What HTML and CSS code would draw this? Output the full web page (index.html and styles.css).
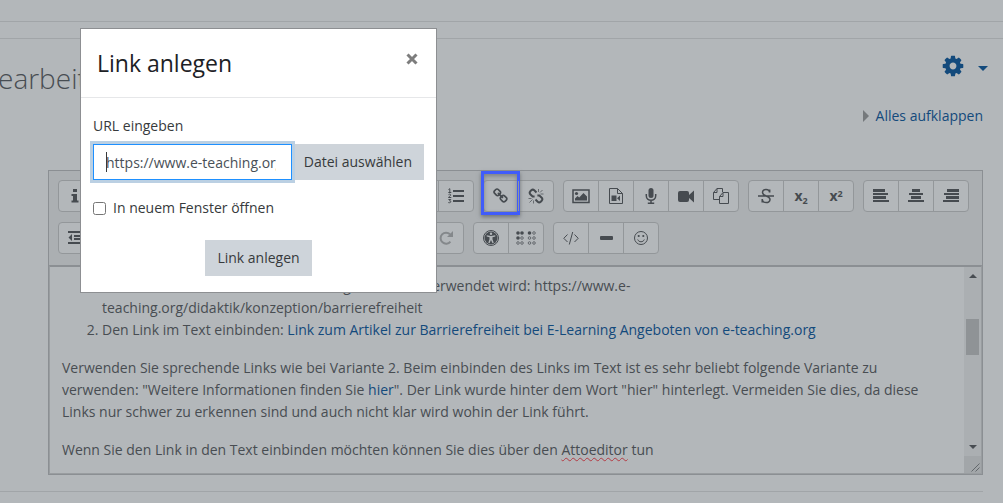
FILE: index.html
```html
<!DOCTYPE html>
<html lang="de">
<head>
<meta charset="utf-8">
<title>Link anlegen</title>
<link rel="stylesheet" href="styles.css">
</head>
<body>
<header class="topbar"></header>
<main class="page">
  <div class="page-head">
    <h1 class="page-title">earbeit</h1>
    <button class="settings" type="button" aria-label="Einstellungen">
      <svg class="cog" viewBox="0 0 1792 1792"><path d="M1152 896q0-106-75-181t-181-75-181 75-75 181 75 181 181 75 181-75 75-181zm512-109v222q0 12-8 23t-20 13l-185 28q-19 54-39 91 35 50 107 138 10 12 10 25t-9 23q-27 37-99 108t-94 71q-12 0-26-9l-138-108q-44 23-91 38-16 136-29 186-7 28-36 28h-222q-14 0-24.500-8.500t-11.500-21.500l-28-184q-49-16-90-37l-141 107q-10 9-25 9-14 0-25-11-126-114-165-168-7-10-7-23 0-12 8-23 15-21 51-66.500t54-70.500q-27-50-41-99l-183-27q-13-2-21-12.500t-8-23.500v-222q0-12 8-23t19-13l186-28q14-46 39-92-40-57-107-138-10-12-10-24 0-10 9-23 26-36 98.500-107.500t94.500-71.500q13 0 26 10l138 107q44-23 91-38 16-136 29-186 7-28 36-28h222q14 0 24.500 8.500t11.500 21.500l28 184q49 16 90 37l142-107q9-9 24-9 13 0 25 10 129 119 165 170 7 8 7 22 0 12-8 23-15 21-51 66.500t-54 70.500q26 50 41 98l183 28q13 2 21 12.500t8 23.500z"/></svg>
      <svg class="caret" viewBox="0 0 10 5"><path d="M0 0h10L5 5z"/></svg>
    </button>
  </div>
  <div class="expand">
    <svg class="expand-arrow" viewBox="0 0 6 12"><path d="M0 0l6 6-6 6z"/></svg>
    <a class="link" href="#">Alles aufklappen</a>
  </div>

  <section class="editor">
    <div class="toolbar">
      <div class="tool-row">
        <div class="lead">
          <div class="group">
            <button class="tool" type="button" aria-label="Mehr Symbole"><svg viewBox="0 0 16 16"><path d="M5 1h4v3H5zM3.500 6H9v6.500h1.500v2h-7v-2H5V8H3.500z"/></svg></button>
          </div>
        </div>
        <div class="group">
          <button class="tool" type="button" aria-label="Liste"><svg viewBox="0 0 16 16"><path d="M0 2h3v3H0zM5 2.500h11v2H5zM0 7h3v3H0zM5 7.500h11v2H5zM0 12h3v3H0zM5 12.500h11v2H5z"/></svg></button>
          <button class="tool" type="button" aria-label="Nummerierte Liste"><svg viewBox="0 0 16 16"><path d="M5 2h11v2H5zM5 7h11v2H5zM5 12h11v2H5z"/><path class="line thin" d="M.5 1.500l1.300-.8v3.800M.3 4.500h3M.5 6.700c.8-1 2.500-.6 2.200.5-.2.800-2 1.300-2.200 2.300h2.800M.4 11.500h2.400l-1.300 1.400c2.200 0 1.600 2.400-1.200 1.700"/></svg></button>
        </div>
        <div class="group">
          <button class="tool marked" type="button" aria-label="Link"><svg viewBox="0 0 1792 1792"><path d="M1456 1216q0-40-28-68l-208-208q-28-28-68-28-42 0-72 32 3 3 19 18.500t21.500 21.500 15 19 13 25.500 3.500 27.500q0 40-28 68t-68 28q-15 0-27.500-3.500t-25.500-13-19-15-21.500-21.500-18.500-19q-33 31-33 73 0 40 28 68l206 207q27 27 68 27 40 0 68-26l147-146q28-28 28-67zm-703-705q0-40-28-68l-206-207q-28-28-68-28-39 0-68 27l-147 146q-28 28-28 67 0 40 28 68l208 208q27 27 68 27 42 0 72-31-3-3-19-18.500t-21.500-21.500-15-19-13-25.500-3.500-27.500q0-40 28-68t68-28q15 0 27.500 3.500t25.500 13 19 15 21.500 21.500 18.500 19q33-31 33-73zm895 705q0 120-85 203l-147 146q-83 83-203 83-121 0-204-85l-206-207q-83-83-83-203 0-123 88-209l-88-88q-86 88-208 88-120 0-204-84l-208-208q-84-84-84-204t85-203l147-146q83-83 203-83 121 0 204 85l206 207q83 83 83 203 0 123-88 209l88 88q86-88 208-88 120 0 204 84l208 208q84 84 84 204z"/></svg></button>
          <button class="tool" type="button" aria-label="Link entfernen"><svg viewBox="0 0 16 16"><path class="line" d="M8.500 4.500L6.300 2.300Q4.800 1 3.300 2.300L2.300 3.300Q1 4.800 2.300 6.300l2.300 2.200 2-.1M7.500 11.500l2.200 2.200q1.500 1.300 3 0l1-1q1.300-1.500 0-3l-2.300-2.200-2 .1"/><path class="line hair" d="M10.500 1v3M12 4.500l2.500-2.500M12.500 6h3M.5 10.500h3M4.500 11.500l-3 3M5.500 12.500v3"/></svg></button>
        </div>
        <div class="group">
          <button class="tool" type="button" aria-label="Bild"><svg class="wide" viewBox="0 0 18 16"><path class="line mid" d="M1 2h16v12.500H1z"/><circle cx="4.500" cy="5.500" r="1.600"/><path d="M3 12.500v-2l2.500-2.500 1.700 1.500L11.500 5 15 8.500v4z"/></svg></button>
          <button class="tool" type="button" aria-label="Mediendatei"><svg viewBox="0 0 16 16"><path class="line thin" d="M1.500.5h8l5 5v10h-13zM9.500.5v5h5"/><path d="M3.500 7.500h5V13h-5zM9 10.200l3-2.700V13z"/></svg></button>
          <button class="tool" type="button" aria-label="Audio aufnehmen"><svg viewBox="0 0 16 16"><rect x="5.500" y="0" width="5" height="10" rx="2.500"/><path class="line mid" d="M3.300 6v1.700c0 6 9.400 6 9.400 0V6M8 12.500V15M4.800 15.200h6.400"/></svg></button>
          <button class="tool" type="button" aria-label="Video aufnehmen"><svg class="wide" viewBox="0 0 18 16"><rect x="1" y="3" width="11" height="11" rx="2"/><path d="M12 7l5-4.500v12L12 10z"/></svg></button>
          <button class="tool" type="button" aria-label="Dateien verwalten"><svg viewBox="0 0 16 16"><path class="line thin" d="M6.500 11.500h-6V4.500l3.500-4h5.500v3.500M.5 4.500H4v-4M6.500 8.500L10 4.500h5.500v11h-9zM6.500 8.500H10v-4"/></svg></button>
        </div>
        <div class="group">
          <button class="tool" type="button" aria-label="Durchgestrichen"><svg viewBox="0 0 16 16"><path class="line mid" d="M0 8h16M11.500 4.500C11.500.5 4.500.2 4.500 4.500c0 4 7.500 3 7.500 7 0 4.300-7.700 4-7.700-.3M11.700 1.500v3M4.200 11v3.500"/></svg></button>
          <button class="tool letter" type="button" aria-label="Tiefgestellt">x<sub>2</sub></button>
          <button class="tool letter" type="button" aria-label="Hochgestellt">x<sup>2</sup></button>
        </div>
        <div class="group">
          <button class="tool" type="button" aria-label="Linksbündig"><svg viewBox="0 0 16 16"><path d="M0 1h12v3H0zM0 5h15v2H0zM0 8h13v3H0zM0 12h16v2H0z"/></svg></button>
          <button class="tool" type="button" aria-label="Zentriert"><svg viewBox="0 0 16 16"><path d="M4 1h8v3H4zM1 5h14v2H1zM3 8h10v3H3zM0 12h16v2H0z"/></svg></button>
          <button class="tool" type="button" aria-label="Rechtsbündig"><svg viewBox="0 0 16 16"><path d="M4 1h12v3H4zM1 5h15v2H1zM3 8h13v3H3zM0 12h16v2H0z"/></svg></button>
        </div>
      </div>
      <div class="tool-row">
        <div class="lead lead-short">
          <div class="group">
            <button class="tool" type="button" aria-label="Ausrücken"><svg viewBox="0 0 16 16"><path d="M0 1h16v2H0zM6 5h10v2H6zM6 8h10v2H6zM0 12h16v2H0zM4 4v7L.5 7.500z"/></svg></button>
          </div>
        </div>
        <div class="group">
          <button class="tool faded" type="button" aria-label="Rückgängig"><svg viewBox="0 0 16 16"><path class="line" d="M4 4.300a5.500 5.500 0 1 1-.4 7.300"/><path d="M1 1v6h6z"/></svg></button>
          <button class="tool faded" type="button" aria-label="Wiederherstellen"><svg viewBox="0 0 16 16"><path class="line" d="M12 4.300a5.500 5.500 0 1 0 .4 7.300"/><path d="M15 1v6H9z"/></svg></button>
        </div>
        <div class="group">
          <button class="tool" type="button" aria-label="Barrierefreiheit prüfen"><svg viewBox="0 0 16 16"><circle class="line thin" cx="8" cy="8" r="7.500"/><circle cx="8" cy="8" r="6.500"/><circle class="cut" cx="8" cy="3.700" r="1.200"/><path class="cut" d="M3.700 5.300L8 6l4.300-.7v1.200L9.500 7.200v2l1.200 3.600-1.200.5L8 10l-1.500 3.300-1.200-.5 1.200-3.600v-2l-2.800-.7z"/></svg></button>
          <button class="tool" type="button" aria-label="Screenreader-Hilfe"><svg class="braille" viewBox="0 0 20 14"><g><circle cx="2" cy="2" r="1.800"/><circle cx="6" cy="2" r="1.800"/><circle cx="2" cy="7" r="1.800"/><circle cx="13.500" cy="2" r="1.800"/></g><g class="line hair"><circle cx="6" cy="7" r="1.300"/><circle cx="2" cy="12" r="1.300"/><circle cx="6" cy="12" r="1.300"/><circle cx="18" cy="2" r="1.300"/><circle cx="13.500" cy="7" r="1.300"/><circle cx="18" cy="7" r="1.300"/><circle cx="13.500" cy="12" r="1.300"/><circle cx="18" cy="12" r="1.300"/></g></svg></button>
        </div>
        <div class="group">
          <button class="tool" type="button" aria-label="HTML"><svg viewBox="0 0 16 16"><path class="line thin" d="M4.500 4.500L.8 8.300l3.700 3.700M11.500 4.500l3.700 3.800-3.700 3.700M9.700 2L6.300 14.500"/></svg></button>
          <button class="tool" type="button" aria-label="Trennlinie"><svg viewBox="0 0 16 16"><rect x="2" y="6" width="13" height="4" rx="1"/></svg></button>
          <button class="tool" type="button" aria-label="Emoji"><svg viewBox="0 0 16 16"><circle class="line thin" cx="8" cy="8" r="6.500"/><circle cx="5.700" cy="6" r="1.100"/><circle cx="10.300" cy="6" r="1.100"/><path class="line thin" d="M4.700 9.500c1 3 5.600 3 6.600 0"/></svg></button>
        </div>
      </div>
    </div>
    <div class="content">
      <div class="text">
        <ol class="steps">
          <li>Den Link auch im Text direkt so einfügen, dass er verwendet wird: https://www.e-<br>teaching.org/didaktik/konzeption/barrierefreiheit</li>
          <li>Den Link im Text einbinden: <a class="link" href="#">Link zum Artikel zur Barrierefreiheit bei E-Learning Angeboten von e-teaching.org</a></li>
        </ol>
        <p>Verwenden Sie sprechende Links wie bei Variante 2. Beim einbinden des Links im Text ist es sehr beliebt folgende Variante zu<br>verwenden: "Weitere Informationen finden Sie <a class="link" href="#">hier</a>". Der Link wurde hinter dem Wort "hier" hinterlegt. Vermeiden Sie dies, da diese<br>Links nur schwer zu erkennen sind und auch nicht klar wird wohin der Link führt.</p>
        <p>Wenn Sie den Link in den Text einbinden möchten können Sie dies über den <span class="misspelled">Attoeditor</span> tun</p>
      </div>
      <div class="scroll" aria-hidden="true">
        <div class="track">
          <svg class="scroll-arrow" viewBox="0 0 8 4"><path d="M0 4h8L4 0z"/></svg>
          <div class="thumb"></div>
          <svg class="scroll-arrow" viewBox="0 0 8 4"><path d="M0 0h8L4 4z"/></svg>
        </div>
        <div class="grip"><svg viewBox="0 0 9 9"><path class="line hair" d="M.5 8.500l8-8M4.500 8.500l4-4"/></svg></div>
      </div>
    </div>
  </section>
  <hr class="rule">
</main>

<div class="dialog" role="dialog" aria-labelledby="dialog-title">
  <div class="dialog-head">
    <h2 class="dialog-title" id="dialog-title">Link anlegen</h2>
    <button class="close" type="button" aria-label="Schließen"><svg viewBox="0 0 12 12"><path d="M1.500 1.500l9 9M10.500 1.500l-9 9"/></svg></button>
  </div>
  <form class="dialog-body">
    <label for="url">URL eingeben</label>
    <div class="url-row">
      <div class="url-field">
        <input class="url" id="url" type="text" value="https://www.e-teaching.org">
        <span class="cursor"></span>
      </div>
      <button class="btn" type="button">Datei auswählen</button>
    </div>
    <label class="check"><input type="checkbox"> In neuem Fenster öffnen</label>
    <button class="btn submit" type="button">Link anlegen</button>
  </form>
</div>
</body>
</html>
```
FILE: styles.css
```css
* { box-sizing: border-box; }

body {
  margin: 0;
  background: #b3b7ba;
  color: #484d52;
  font-family: "Open Sans", "Noto Sans", sans-serif;
  font-size: 14px;
  line-height: 22px;
  overflow: hidden;
}

button, input { font: inherit; color: inherit; }
svg { display: block; fill: currentColor; }
.link { color: #134a7c; text-decoration: none; }

.topbar { height: 22px; border-bottom: 1px solid #a1a5a8; }

.page {
  margin-top: 16px;
  padding-right: 20px;
}
.page::before {
  content: "";
  display: block;
  margin-right: -20px;
  border-top: 1px solid #a1a5a8;
}

.page-head {
  display: flex;
  justify-content: space-between;
  align-items: flex-start;
  padding-top: 15px;
}
.page-title { margin: 0 0 0 -2px; padding-top: 4px; font-size: 28px; font-weight: 300; line-height: 40px; }
.settings {
  display: flex;
  align-items: center;
  gap: 13px;
  margin-right: -5px;
  padding: 0;
  border: 0;
  background: none;
  color: #134a7c;
}
.cog { width: 24px; height: 24px; }
.caret { width: 10px; height: 5px; margin-top: 4px; }

.expand { display: flex; justify-content: flex-end; align-items: center; gap: 7px; margin-top: 7px; }
.expand-arrow { width: 6px; height: 12px; color: #75797c; }

.editor { margin: 43px 0 0 48px; border: 1px solid #8b8f93; }
.toolbar { padding: 9px 9px 11px; background: #abafb2; display: grid; gap: 10px; }
.tool-row { display: flex; gap: 9px; }
.lead { flex: 0 0 336px; }
.lead-short { flex-basis: 326px; }

.group {
  display: flex;
  width: max-content;
  border: 1px solid #93979a;
  border-radius: 4px;
  background: #b3b7ba;
}
.tool {
  position: relative;
  display: flex;
  align-items: center;
  justify-content: center;
  width: 34px;
  height: 30px;
  padding: 0;
  border: 0;
  background: none;
  color: #464b50;
}
.tool + .tool { width: 35px; border-left: 1px solid #93979a; }
.tool svg { width: 16px; height: 16px; }
.tool svg.wide { width: 18px; }
.tool svg.braille { width: 20px; height: 14px; }
.tool.faded { color: #84888b; }
.letter { font-weight: 700; line-height: 16px; }
.letter sub, .letter sup { font-size: 9px; line-height: 9px; }
.letter sub { align-self: flex-end; padding-bottom: 6px; }
.letter sup { align-self: flex-start; padding-top: 8px; }

.line { fill: none; stroke: currentColor; stroke-width: 2; }
.mid { stroke-width: 1.5; }
.thin { stroke-width: 1; }
.hair { stroke-width: .7; }
.cut { fill: #b3b7ba; }

.marked::after {
  content: "";
  position: absolute;
  inset: -10px -2px -4px -3px;
  border: 3px solid #405cfa;
  box-shadow: 0 2px 4px #6f7377, inset 0 2px 4px #7b7f83;
}

.content { display: flex; height: 209px; border: 1px solid #999da0; border-top: 2px solid #8b8f93; }
.text { flex: 1; padding: 8px 12px; white-space: nowrap; overflow: hidden; }
.text p { margin: 0 0 16px; }
.steps { margin: 0 0 16px; padding-left: 40px; }

.misspelled { text-decoration: underline wavy #b33a43 1px; text-underline-offset: 2px; text-decoration-skip-ink: none; }

.scroll { display: flex; flex-direction: column; flex: 0 0 17px; }
.track { flex: 1; display: flex; flex-direction: column; align-items: center; padding: 7px 0; background: #abafb2; }
.scroll-arrow { width: 8px; height: 4px; }
.thumb { width: 13px; height: 36px; margin: 41px 0 auto; background: #8f9396; }
.grip { height: 17px; padding: 7px 1px 0 7px; background: #a2a6a9; }
.grip svg { width: 9px; height: 9px; }

.rule { margin: 16px 0 0; border: 0; border-top: 1px solid #a1a5a8; }

.dialog {
  position: absolute;
  z-index: 1;
  top: 28px;
  left: 80px;
  width: 357px;
  border: 1px solid #8d8f92;
  background: #fff;
  color: #373a3c;
}
.dialog-head {
  display: flex;
  justify-content: space-between;
  padding: 16px;
  border-bottom: 1px solid #e6e7e9;
}
.dialog-title { margin: 0; color: #1d2125; font-size: 23px; font-weight: 400; line-height: 36px; }
.close { align-self: flex-start; padding: 8px 2px; border: 0; background: none; color: #7d7d7d; }
.close svg { width: 12px; height: 12px; stroke: currentColor; stroke-width: 3; }

.dialog-body { display: flex; flex-direction: column; padding: 17px 12px 16px; }
.url-row { display: flex; margin-top: 7px; }
.url-field { position: relative; flex: 1; min-width: 0; }
.url {
  width: 100%;
  height: 36px;
  padding: 6px 15px 6px 12px;
  border: 1px solid #1e90ff;
  outline: 0;
  background: #fff;
  color: #495057;
  box-shadow: 0 0 0 3px #bbd0e3;
}
.cursor { position: absolute; left: 13px; top: 8px; width: 1px; height: 20px; background: #373a3c; }
.btn { height: 36px; padding: 6px 12px; border: 0; background: #ced4da; color: #373a3c; line-height: 24px; }
.url-row .btn { position: relative; flex: none; z-index: -1; }
.check { display: flex; align-items: center; gap: 7px; margin-top: 17px; }
.check input { margin: 0; width: 13px; height: 13px; }
.submit { align-self: center; margin-top: 21px; }
```
